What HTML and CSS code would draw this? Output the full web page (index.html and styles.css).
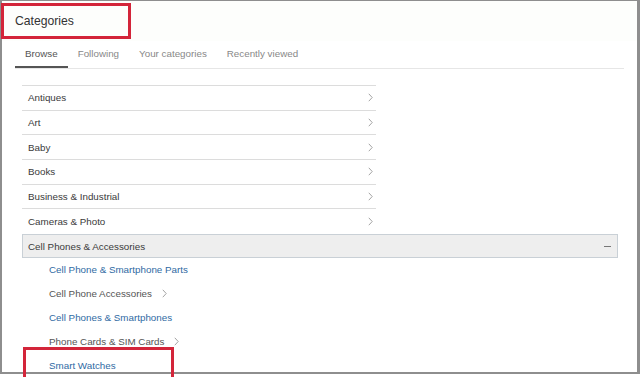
FILE: index.html
```html
<!DOCTYPE html>
<html>
<head>
<meta charset="utf-8">
<link rel="stylesheet" href="styles.css">
</head>
<body>
<div class="frame">
  <div class="header">Categories</div>
  <div class="tabs">
    <div class="tab active">Browse</div>
    <div class="tab">Following</div>
    <div class="tab">Your categories</div>
    <div class="tab">Recently viewed</div>
  </div>
  <div class="cat-list">
    <div class="row"><span>Antiques</span><svg class="chev" width="5" height="9" viewBox="0 0 5 9"><polyline points="0.8,0.8 4.2,4.5 0.8,8.2"/></svg></div>
    <div class="row"><span>Art</span><svg class="chev" width="5" height="9" viewBox="0 0 5 9"><polyline points="0.8,0.8 4.2,4.5 0.8,8.2"/></svg></div>
    <div class="row"><span>Baby</span><svg class="chev" width="5" height="9" viewBox="0 0 5 9"><polyline points="0.8,0.8 4.2,4.5 0.8,8.2"/></svg></div>
    <div class="row"><span>Books</span><svg class="chev" width="5" height="9" viewBox="0 0 5 9"><polyline points="0.8,0.8 4.2,4.5 0.8,8.2"/></svg></div>
    <div class="row"><span>Business &amp; Industrial</span><svg class="chev" width="5" height="9" viewBox="0 0 5 9"><polyline points="0.8,0.8 4.2,4.5 0.8,8.2"/></svg></div>
    <div class="row"><span>Cameras &amp; Photo</span><svg class="chev" width="5" height="9" viewBox="0 0 5 9"><polyline points="0.8,0.8 4.2,4.5 0.8,8.2"/></svg></div>
  </div>
  <div class="open-row">
    <span>Cell Phones &amp; Accessories</span>
    <span class="minus"></span>
  </div>
  <div class="sub-list">
    <div class="sub link">Cell Phone &amp; Smartphone Parts</div>
    <div class="sub">Cell Phone Accessories<svg class="chev sub-chev" width="5" height="9" viewBox="0 0 5 9"><polyline points="0.8,0.8 4.2,4.5 0.8,8.2"/></svg></div>
    <div class="sub link">Cell Phones &amp; Smartphones</div>
    <div class="sub">Phone Cards &amp; SIM Cards<svg class="chev sub-chev" width="5" height="9" viewBox="0 0 5 9"><polyline points="0.8,0.8 4.2,4.5 0.8,8.2"/></svg></div>
    <div class="sub link">Smart Watches</div>
  </div>
</div>
<div class="mark mark-title"></div>
<div class="mark mark-watch"></div>
</body>
</html>
```

FILE: styles.css
```css
html, body {
  margin: 0;
  padding: 0;
  overflow: hidden;
  background: #fff;
}
body {
  position: relative;
  width: 640px;
  height: 377px;
  font-family: "Liberation Sans", Arial, sans-serif;
  color: #333;
}
.frame {
  width: 640px;
  height: 374px;
  box-sizing: border-box;
  border: 2px solid #8e8e8e;
  border-top-width: 1px;
  border-right-width: 3px;
  background: #fff;
}
.header {
  height: 40px;
  padding-left: 13px;
  display: flex;
  align-items: center;
  font-size: 12.2px;
  color: #333;
  background: #fdfefc;
}
.tabs {
  display: flex;
  margin: 0 13px;
  border-bottom: 1px solid #e6e6e6;
}
.tab {
  padding: 7px 10px 8px;
  line-height: 12px;
  font-size: 9.8px;
  color: #888;
}
.tab.active {
  color: #555;
  box-shadow: inset 0 -2px 0 #555;
}
.cat-list {
  margin: 16px 0 0 20px;
  width: 354px;
}
.row {
  height: 23.7px;
  border-top: 1px solid #dcdcdc;
  display: flex;
  align-items: center;
  justify-content: space-between;
  padding: 0 3px 0 6px;
  font-size: 9.8px;
  color: #3a3a3a;
}
.chev {
  display: block;
}
.chev polyline {
  fill: none;
  stroke: #9a9a9a;
  stroke-width: 0.9;
}
.open-row {
  margin: 1px 0 0 20px;
  width: 596px;
  height: 24px;
  box-sizing: border-box;
  border: 1px solid #c9d0d6;
  background: #eeeeee;
  display: flex;
  align-items: center;
  justify-content: space-between;
  padding: 0 6px 0 5px;
  font-size: 9.8px;
  color: #3a3a3a;
}
.minus {
  width: 7px;
  height: 1px;
  background: #777;
}
.sub-list {
  margin-top: -1px;
  padding-left: 47px;
}
.sub {
  height: 24px;
  display: flex;
  align-items: center;
  font-size: 9.8px;
  color: #555;
}
.sub.link {
  color: #2f6aa3;
}
.sub-chev {
  margin-left: 10px;
}
.mark {
  position: absolute;
  box-sizing: border-box;
  border: 3px solid #d3253a;
}
.mark-title {
  left: 1px;
  top: 3px;
  width: 130px;
  height: 36px;
}
.mark-watch {
  left: 23px;
  top: 347px;
  width: 151px;
  height: 36px;
}
```
